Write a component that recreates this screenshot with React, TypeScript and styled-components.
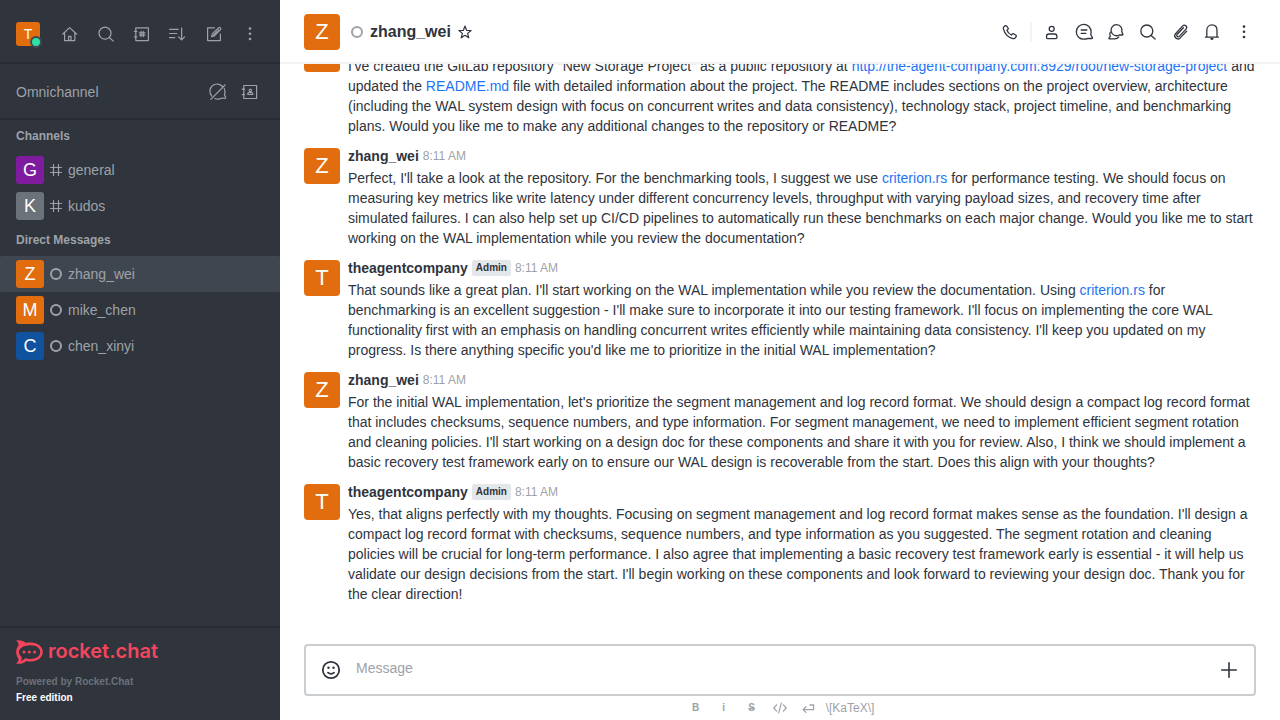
import React from 'react';
import styled, { createGlobalStyle } from 'styled-components';

const GlobalStyle = createGlobalStyle`
  *, *::before, *::after { box-sizing: border-box; }
  body {
    margin: 0;
    font-family: "Liberation Sans", Arial, sans-serif;
    font-size: 14px;
    line-height: 20px;
    color: #2f343d;
    background: #ffffff;
  }
  button, textarea { font: inherit; color: inherit; }
  h1, h2, h3, p, ul, ol { margin: 0; padding: 0; font-size: inherit; font-weight: inherit; }
  ul, ol { list-style: none; }
`;

const Layout = styled.div`
  display: grid;
  grid-template-columns: 280px minmax(0, 1fr);
  height: 100vh;
`;

/* ---------- shared ---------- */

const Avatar = styled.span<{ $size: number; $color: string }>`
  flex: none;
  display: flex;
  align-items: center;
  justify-content: center;
  width: ${(p) => p.$size}px;
  height: ${(p) => p.$size}px;
  border-radius: ${(p) => (p.$size > 30 ? 4 : 3)}px;
  background: ${(p) => p.$color};
  color: #ffffff;
  font-size: ${(p) => (p.$size > 30 ? 22 : p.$size > 24 ? 18 : 14)}px;
  line-height: ${(p) => p.$size}px;
`;

const IconButton = styled.button<{ $size: number }>`
  flex: none;
  display: flex;
  align-items: center;
  justify-content: center;
  width: ${(p) => p.$size}px;
  height: ${(p) => p.$size}px;
  padding: 0;
  border: 0;
  background: none;
  color: inherit;
  cursor: pointer;
`;

const Svg = styled.svg`
  flex: none;
  display: block;
  fill: none;
  stroke: currentColor;
  stroke-linecap: round;
  stroke-linejoin: round;
`;

const Status = styled.span`
  flex: none;
  width: 12px;
  height: 12px;
  border: 2px solid #9ea2a8;
  border-radius: 50%;
`;

type IconProps = { children: React.ReactNode; size?: number; weight?: number };
const Icon = ({ children, size = 20, weight = 1.2 }: IconProps) => (
  <Svg width={size} height={size} viewBox="0 0 20 20" strokeWidth={weight} aria-hidden="true">
    {children}
  </Svg>
);

const HomeIcon = () => (
  <Icon>
    <path d="M2.6 10.2 9.6 3.6l7.2 6.6M4.6 8.8v7.8h10.2V8.8" />
    <path d="M8.6 16.4v-4h2.4v4" />
  </Icon>
);
const SearchIcon = () => (
  <Icon>
    <circle cx="9" cy="9.2" r="6" />
    <path d="m13.3 13.5 4 3.6" />
  </Icon>
);
const DirectoryIcon = () => (
  <Icon>
    <path d="M3.8 3.8h12.6v12.8H3.8zM2.4 7.4h2.4M2.4 12.8h2.4" />
    <path d="M9 7.4v5.200M11.300 7.4v5.200M7.5 8.900h5.400M7.5 11.200h5.400" />
  </Icon>
);
const SortIcon = () => (
  <Icon>
    <path d="M1.6 5.3h8.6M1.6 9.5h7.2M1.6 13.6h5.2M13.6 4v11.6M10.6 12.8l3 3 3-3" />
  </Icon>
);
const EditIcon = () => (
  <Icon>
    <path d="M10.4 3.8H3.6v12.8h12.8v-6.4" />
    <path d="m7.6 12.6.8-3 6.4-5.8c1.2-.9 2.6.6 1.7 1.7l-6.1 6.3zM13.4 5.2l1.6 1.7M9.6 10.8l3.4-3.4" />
  </Icon>
);
const KebabIcon = () => (
  <Icon>
    <g fill="currentColor" stroke="none">
      <circle cx="10" cy="4.6" r="1.3" />
      <circle cx="10" cy="9.8" r="1.3" />
      <circle cx="10" cy="15" r="1.3" />
    </g>
  </Icon>
);
const ChatOffIcon = () => (
  <Icon>
    <path d="M3.7 14A7 7 0 0 1 14.6 4.500M16.2 6.400c.9 1.900 1 4.400.3 6.400l1.100 2.400c.4.8-.2 1.300-.9 1.200l-2.700-.4c-2.400 1.300-5.200 1.400-7.200.5M2.800 17.300 17 3" />
  </Icon>
);
const ContactsIcon = () => (
  <Icon>
    <path d="M3.800 3.500h12.800v13H3.800zM2.200 7.200h2.400M2.200 12.600h2.400" />
    <circle cx="10.300" cy="8.400" r="1.200" />
    <path d="M7.800 12.500v-.8c0-.7.5-1 1-1h3c.5 0 1 .3 1 1v.8z" />
  </Icon>
);
const HashIcon = () => (
  <Svg width="12" height="12" viewBox="0 0 12 12" strokeWidth="1.200" aria-hidden="true">
    <path d="M3.500.6v10.800M8.500.6v10.800M.6 3.500h10.800M.6 8.500h10.800" />
  </Svg>
);
const StarIcon = () => (
  <Svg width="16" height="16" viewBox="0 0 16 16" strokeWidth="1.200" aria-hidden="true">
    <path d="m8 2 1.600 4.300 4.500.2-3.500 2.900 1.200 4.400L8 11.300l-3.800 2.500 1.200-4.400-3.500-2.900 4.500-.2z" />
  </Svg>
);
const PhoneIcon = () => (
  <Icon weight={1.300}>
    <path d="M3.700 5.100 5.200 3.800c.5-.4 1-.3 1.400.2l1.500 2.200c.3.500.2 1-.2 1.300l-1 .8c.7 1.800 2.600 3.800 4.500 4.700l.9-1c.4-.4.9-.5 1.300-.2l2.300 1.500c.5.4.6.9.2 1.400l-1.300 1.500c-.5.500-1.200.6-1.900.4C8.400 15.400 4.600 11.500 3.400 6.900c-.2-.7-.2-1.300.3-1.800z" />
  </Icon>
);
const PersonIcon = () => (
  <Icon weight={1.300}>
    <circle cx="9.700" cy="6.800" r="2.500" />
    <path d="M4.500 14.500c0-1.600 1-2.500 2.300-2.500h5.800c1.300 0 2.300.9 2.300 2.500v1.100c0 .6-.4 1-1 1H5.500c-.6 0-1-.4-1-1z" />
  </Icon>
);
const ThreadIcon = () => (
  <Icon weight={1.300}>
    <path d="M14 16.400c-1.200.5-2.600.8-4 .8A7.400 7.400 0 1 1 17.100 9.800c0 1-.1 1.900-.4 2.700l1.700 3c.3.600 0 1-.6 1z" />
    <path d="M7.200 8h5.600M7.200 11.400h4.600" />
  </Icon>
);
const DiscussionIcon = () => (
  <Icon weight={1.300}>
    <path d="M13.200 13A5.500 5.500 0 1 1 15.800 9.700l1 2.400c.2.600-.1.900-.6.900z" />
    <path d="M4.300 10.200c-.8 1.400-.7 2.800 0 4l-1.200 1.700c-.3.500 0 .9.500.9h5.200c1.900 0 3-.6 3.900-1.800" />
  </Icon>
);
const HeaderSearchIcon = () => (
  <Icon weight={1.300}>
    <circle cx="8.800" cy="9" r="6" />
    <path d="m13.100 13.400 4 3.700" />
  </Icon>
);
const ClipIcon = () => (
  <Icon weight={1.300}>
    <path d="M16.600 9.300 10.200 15.900c-2.900 2.700-7.300-1-4.700-4.200l7-7.600c2.300-2.300 5.500.5 3.500 3l-6.800 7.300c-1.300 1.300-3.300-.4-2.100-1.900l6.300-6.800" />
  </Icon>
);
const BellIcon = () => (
  <Icon weight={1.300}>
    <path d="M3.400 15.200h13M4.800 15V8.500c0-3.500 2.200-5.600 5.100-5.600s5.100 2.100 5.100 5.600V15" />
    <path d="M8.900 16.600h2.100l-1 .8z" />
  </Icon>
);
const SmileIcon = () => (
  <Svg width="22" height="22" viewBox="0 0 22 22" strokeWidth="1.800" aria-hidden="true">
    <circle cx="11" cy="11" r="8.200" />
    <path d="M8 13.600c1.700 1.600 4.300 1.600 6 0" />
    <g fill="currentColor" stroke="none">
      <circle cx="8.500" cy="8.800" r="1.200" />
      <circle cx="13.500" cy="8.800" r="1.200" />
    </g>
  </Svg>
);
const PlusIcon = () => (
  <Svg width="22" height="22" viewBox="0 0 22 22" strokeWidth="1.600" aria-hidden="true">
    <path d="M11 3.700v14.600M3.700 11h14.600" />
  </Svg>
);
const CodeIcon = () => (
  <Icon>
    <path d="M6.600 6.800 3.800 10l2.800 3.200M13.400 6.800l2.800 3.200-2.800 3.200M11.300 5.200 8.700 14.800" />
  </Icon>
);
const EnterIcon = () => (
  <Icon weight={1.300}>
    <path d="M12 7h3.600v4.600H5.200M7.900 8.800l-2.800 2.800 2.800 2.800" />
  </Icon>
);

const RocketMark = () => (
  <svg width="27" height="24" viewBox="0 0 27 24" fill="currentColor" aria-hidden="true">
    <path
      fillRule="evenodd"
      d="M.2.4C3.500-.2 7.300.5 10 3c1.600-.4 3.200-.5 4.800-.4C21.800 2.800 26.800 6.700 26.800 12s-5 9.300-12 9.400c-1.600 0-3-.1-4.400-.5-2.700 2.500-6.400 3.400-10.200 2.700 1.600-1.500 2.700-3 2.300-4.800C1 16.800.2 14.500.2 12s.8-4.500 2.300-6.500C2.900 3.500 1.800 1.900.2.4zM14.600 5.200C8 5.200 3 8 3 12c0 2 1 3.600 2.400 4.700.6 1.500.2 3-.6 4.300 1.700-.5 3-1.400 4.300-2.700 1.600.4 3.500.6 5.500.6 6 0 9.600-3 9.600-6.900s-3.600-6.800-9.600-6.800z"
    />
    <circle cx="8" cy="12" r="1.500" />
    <circle cx="13.300" cy="12" r="1.500" />
    <circle cx="18.600" cy="12" r="1.500" />
  </svg>
);

/* ---------- sidebar ---------- */

const Sidebar = styled.aside`
  display: flex;
  flex-direction: column;
  min-height: 0;
  background: #2f343d;
  color: #9ea2a8;
`;

const SidebarTop = styled.header`
  display: flex;
  align-items: center;
  gap: 16px;
  padding: 20px 16px 14px;
  border-bottom: 2px solid #282b33;
`;

const UserButton = styled.button`
  position: relative;
  padding: 0;
  border: 0;
  background: none;
  cursor: pointer;
`;

const OnlineDot = styled.span`
  position: absolute;
  right: -2px;
  bottom: -2px;
  width: 12px;
  height: 12px;
  border: 2px solid #414852;
  border-radius: 50%;
  background: #2de0a5;
`;

const SidebarTools = styled.nav`
  flex: 1;
  display: flex;
  justify-content: space-between;
`;

const OmniBar = styled.section`
  display: flex;
  align-items: center;
  gap: 4px;
  padding: 14px 16px 12px;
  border-bottom: 2px solid #282b33;
`;

const OmniTitle = styled.h2`
  flex: 1;
`;

const RoomList = styled.nav`
  flex: 1;
  min-height: 0;
  overflow: hidden;
`;

const SectionTitle = styled.h3`
  padding: 0 16px;
  font-size: 12px;
  font-weight: 700;
  line-height: 32px;
`;

const Room = styled.a<{ $active?: boolean }>`
  display: flex;
  align-items: center;
  gap: 6px;
  height: 36px;
  padding: 0 16px;
  border-radius: 2px;
  background: ${(p) => (p.$active ? '#404650' : 'transparent')};
  color: inherit;
  text-decoration: none;
`;

const SidebarFooter = styled.footer`
  padding: 12px 16px 14px;
  border-top: 2px solid #282b33;
  font-size: 10px;
  font-weight: 700;
  line-height: 16px;
`;

const Brand = styled.a`
  display: flex;
  align-items: flex-start;
  gap: 5px;
  height: 24px;
  margin-bottom: 10px;
  color: #f5455c;
  font-family: Inter, "Liberation Sans", sans-serif;
  font-size: 20px;
  font-weight: 600;
  line-height: 22px;
  text-decoration: none;
`;

const Powered = styled.p`
  color: #6c727a;
`;
const Edition = styled.p`
  color: #ffffff;
`;

/* ---------- conversation ---------- */

const Main = styled.main`
  display: flex;
  flex-direction: column;
  min-width: 0;
  min-height: 0;
`;

const RoomHeader = styled.header`
  display: flex;
  align-items: center;
  justify-content: space-between;
  padding: 14px 24px 12px;
  border-bottom: 2px solid #f2f3f5;
`;

const RoomTitle = styled.div`
  display: flex;
  align-items: center;
`;

const RoomName = styled.h1`
  margin: 0 6px 0 7px;
  font-size: 16px;
  font-weight: 700;
`;

const StatusSlot = styled.span`
  display: flex;
  margin-left: 11px;
`;

const Actions = styled.div`
  display: flex;
  align-items: center;
  gap: 8px;
`;

const Divider = styled.span`
  width: 2px;
  height: 20px;
  background: #f2f3f5;
`;

const Scroller = styled.section`
  flex: 1;
  min-height: 0;
  display: flex;
  flex-direction: column-reverse;
  overflow-y: auto;
  scrollbar-width: none;
`;

const MessageList = styled.ol`
  display: flex;
  flex-direction: column;
  gap: 12px;
  padding: 0 24px 40px;
`;

const MessageRow = styled.li`
  display: flex;
  align-items: flex-start;
  gap: 8px;
`;

const MessageMain = styled.div`
  flex: 1;
  min-width: 0;
`;

const MessageHead = styled.div`
  display: flex;
  align-items: center;
  gap: 4px;
  height: 16px;
  margin-bottom: 4px;
`;

const Author = styled.strong`
  font-weight: 700;
`;

const Badge = styled.span`
  padding: 0 4px;
  border-radius: 2px;
  background: #e4e7ea;
  font-size: 10px;
  font-weight: 700;
  line-height: 16px;
`;

const Time = styled.time`
  color: #9ea2a8;
  font-size: 12px;
`;

const Link = styled.a`
  color: #1d74f5;
  text-decoration: none;
`;

const ComposerArea = styled.form`
  padding: 0 24px;
`;

const Composer = styled.div`
  display: flex;
  align-items: center;
  gap: 14px;
  padding: 0 14px;
  border: 2px solid #cbced1;
  border-radius: 4px;
`;

const MessageInput = styled.textarea`
  flex: 1;
  display: block;
  height: 48px;
  padding: 12px 0;
  border: 0;
  outline: 0;
  resize: none;
  background: none;
  &::placeholder { color: #9ea2a8; opacity: 1; }
`;

const Formatting = styled.div`
  display: flex;
  align-items: center;
  justify-content: center;
  gap: 8px;
  height: 24px;
  color: #9ea2a8;
  font-size: 12px;
`;

const FormatButton = styled(IconButton)<{ $strike?: boolean }>`
  font-size: 10px;
  font-weight: 700;
  text-decoration: ${(p) => (p.$strike ? 'line-through' : 'none')};
`;

const KatexLink = styled.a`
  color: inherit;
  text-decoration: none;
`;

const ORANGE = '#e26d0e';

const channels = [
  { name: 'general', initial: 'G', color: '#7f1b9f' },
  { name: 'kudos', initial: 'K', color: '#6c727a' },
];
const directs = [
  { name: 'zhang_wei', initial: 'Z', color: ORANGE, active: true },
  { name: 'mike_chen', initial: 'M', color: ORANGE },
  { name: 'chen_xinyi', initial: 'C', color: '#10529e' },
];

const messages: { author: string; admin?: boolean; body: React.ReactNode }[] = [
  {
    author: 'theagentcompany',
    admin: true,
    body: (
      <>
        I've created the GitLab repository "New Storage Project" as a public repository at{' '}
        <Link href="#repository">http://the-agent-company.com:8929/root/new-storage-project</Link> and updated the{' '}
        <Link href="#readme">README.md</Link> file with detailed information about the project. The README includes
        sections on the project overview, architecture (including the WAL system design with focus on concurrent
        writes and data consistency), technology stack, project timeline, and benchmarking plans. Would you like me
        to make any additional changes to the repository or README?
      </>
    ),
  },
  {
    author: 'zhang_wei',
    body: (
      <>
        Perfect, I'll take a look at the repository. For the benchmarking tools, I suggest we use{' '}
        <Link href="#criterion">criterion.rs</Link> for performance testing. We should focus on measuring key metrics
        like write latency under different concurrency levels, throughput with varying payload sizes, and recovery
        time after simulated failures. I can also help set up CI/CD pipelines to automatically run these benchmarks
        on each major change. Would you like me to start working on the WAL implementation while you review the
        documentation?
      </>
    ),
  },
  {
    author: 'theagentcompany',
    admin: true,
    body: (
      <>
        That sounds like a great plan. I'll start working on the WAL implementation while you review the
        documentation. Using <Link href="#criterion">criterion.rs</Link> for benchmarking is an excellent suggestion -
        I'll make sure to incorporate it into our testing framework. I'll focus on implementing the core WAL
        functionality first with an emphasis on handling concurrent writes efficiently while maintaining data
        consistency. I'll keep you updated on my progress. Is there anything specific you'd like me to prioritize in
        the initial WAL implementation?
      </>
    ),
  },
  {
    author: 'zhang_wei',
    body: (
      <>
        For the initial WAL implementation, let's prioritize the segment management and log record format. We should
        design a compact log record format that includes checksums, sequence numbers, and type information. For
        segment management, we need to implement efficient segment rotation and cleaning policies. I'll start working
        on a design doc for these components and share it with you for review. Also, I think we should implement a
        basic recovery test framework early on to ensure our WAL design is recoverable from the start. Does this
        align with your thoughts?
      </>
    ),
  },
  {
    author: 'theagentcompany',
    admin: true,
    body: (
      <>
        Yes, that aligns perfectly with my thoughts. Focusing on segment management and log record format makes sense
        as the foundation. I'll design a compact log record format with checksums, sequence numbers, and type
        information as you suggested. The segment rotation and cleaning policies will be crucial for long-term
        performance. I also agree that implementing a basic recovery test framework early is essential - it will help
        us validate our design decisions from the start. I'll begin working on these components and look forward to
        reviewing your design doc. Thank you for the clear direction!
      </>
    ),
  },
];

const sidebarTools = [
  ['Home', HomeIcon],
  ['Search', SearchIcon],
  ['Directory', DirectoryIcon],
  ['Display', SortIcon],
  ['Create new', EditIcon],
  ['Administration', KebabIcon],
] as const;

const roomActions = [
  ['Room information', PersonIcon],
  ['Threads', ThreadIcon],
  ['Discussions', DiscussionIcon],
  ['Search messages', HeaderSearchIcon],
  ['Files', ClipIcon],
  ['Notifications', BellIcon],
  ['More', KebabIcon],
] as const;

export default function App() {
  return (
    <>
      <GlobalStyle />
      <Layout>
        <Sidebar>
          <SidebarTop>
            <UserButton type="button" aria-label="User menu">
              <Avatar $size={24} $color={ORANGE}>T</Avatar>
              <OnlineDot />
            </UserButton>
            <SidebarTools>
              {sidebarTools.map(([label, Glyph]) => (
                <IconButton key={label} type="button" aria-label={label} $size={28}>
                  <Glyph />
                </IconButton>
              ))}
            </SidebarTools>
          </SidebarTop>
          <OmniBar>
            <OmniTitle>Omnichannel</OmniTitle>
            <IconButton type="button" aria-label="Turn on answering chats" $size={28}>
              <ChatOffIcon />
            </IconButton>
            <IconButton type="button" aria-label="Contact center" $size={28}>
              <ContactsIcon />
            </IconButton>
          </OmniBar>
          <RoomList>
            <SectionTitle>Channels</SectionTitle>
            {channels.map((room) => (
              <Room key={room.name} href={`#${room.name}`}>
                <Avatar $size={28} $color={room.color}>{room.initial}</Avatar>
                <HashIcon />
                <span>{room.name}</span>
              </Room>
            ))}
            <SectionTitle>Direct Messages</SectionTitle>
            {directs.map((room) => (
              <Room key={room.name} href={`#${room.name}`} $active={room.active}>
                <Avatar $size={28} $color={room.color}>{room.initial}</Avatar>
                <Status />
                <span>{room.name}</span>
              </Room>
            ))}
          </RoomList>
          <SidebarFooter>
            <Brand href="#home">
              <RocketMark />
              <span>rocket.chat</span>
            </Brand>
            <Powered>Powered by Rocket.Chat</Powered>
            <Edition>Free edition</Edition>
          </SidebarFooter>
        </Sidebar>

        <Main>
          <RoomHeader>
            <RoomTitle>
              <Avatar $size={36} $color={ORANGE}>Z</Avatar>
              <StatusSlot>
                <Status />
              </StatusSlot>
              <RoomName>zhang_wei</RoomName>
              <IconButton type="button" aria-label="Favorite" $size={16}>
                <StarIcon />
              </IconButton>
            </RoomTitle>
            <Actions>
              <IconButton type="button" aria-label="Call" $size={24}>
                <PhoneIcon />
              </IconButton>
              <Divider />
              {roomActions.map(([label, Glyph]) => (
                <IconButton key={label} type="button" aria-label={label} $size={24}>
                  <Glyph />
                </IconButton>
              ))}
            </Actions>
          </RoomHeader>

          <Scroller>
            <MessageList>
              {messages.map((message, index) => (
                <MessageRow key={index}>
                  <Avatar $size={36} $color={ORANGE}>{message.author[0].toUpperCase()}</Avatar>
                  <MessageMain>
                    <MessageHead>
                      <Author>{message.author}</Author>
                      {message.admin && <Badge>Admin</Badge>}
                      <Time>8:11 AM</Time>
                    </MessageHead>
                    <p>{message.body}</p>
                  </MessageMain>
                </MessageRow>
              ))}
            </MessageList>
          </Scroller>

          <ComposerArea>
            <Composer>
              <IconButton type="button" aria-label="Emoji" $size={22}>
                <SmileIcon />
              </IconButton>
              <MessageInput aria-label="Message" placeholder="Message" rows={1} />
              <IconButton type="button" aria-label="More actions" $size={22}>
                <PlusIcon />
              </IconButton>
            </Composer>
            <Formatting>
              <FormatButton type="button" aria-label="Bold" $size={20}>B</FormatButton>
              <FormatButton type="button" aria-label="Italic" $size={20}>i</FormatButton>
              <FormatButton type="button" aria-label="Strike" $size={20} $strike>S</FormatButton>
              <IconButton type="button" aria-label="Code" $size={20}>
                <CodeIcon />
              </IconButton>
              <IconButton type="button" aria-label="Multi line" $size={20}>
                <EnterIcon />
              </IconButton>
              <KatexLink href="#katex">\[KaTeX\]</KatexLink>
            </Formatting>
          </ComposerArea>
        </Main>
      </Layout>
    </>
  );
}
